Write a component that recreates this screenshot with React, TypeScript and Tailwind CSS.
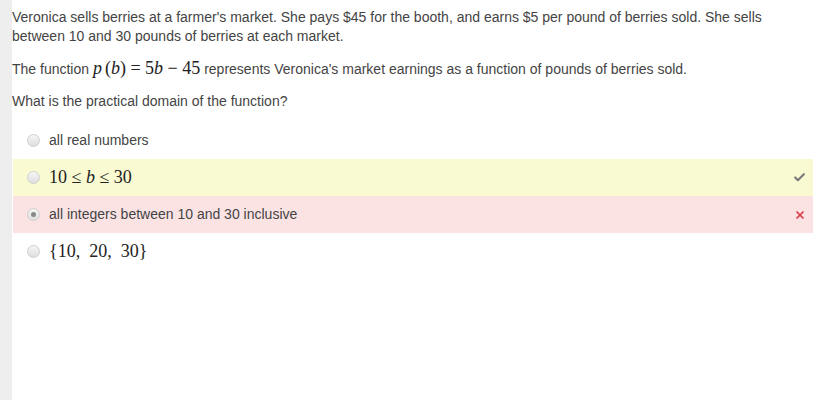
import { Check, X } from 'lucide-react'

const serif = { fontFamily: '"Liberation Serif", "DejaVu Serif", serif' }

function Radio({ checked }: { checked?: boolean }) {
  return (
    <span className="w-[13px] h-[13px] rounded-full border border-[#cfcfcf] bg-gradient-to-b from-[#f6f6f6] to-[#dedede] flex items-center justify-center shrink-0">
      {checked && <span className="w-[5px] h-[5px] rounded-full bg-[#888]" />}
    </span>
  )
}

function Option({
  children,
  bg,
  checked,
  mark
}: {
  children: React.ReactNode
  bg?: string
  checked?: boolean
  mark?: 'ok' | 'bad'
}) {
  return (
    <div className={`h-[37px] flex items-center pl-[14px] pr-[7px] ${bg ?? ''}`}>
      <Radio checked={checked} />
      <div className="ml-[9px] flex-1">{children}</div>
      {mark === 'ok' && <Check size={13} strokeWidth={4} className="text-[#7a7a7a]" />}
      {mark === 'bad' && <X size={12} strokeWidth={3.5} className="text-[#dd3b47]" />}
    </div>
  )
}

export default function App() {
  return (
    <div
      className="flex min-h-[400px] bg-white text-[14px] text-[#444]"
      style={{ fontFamily: '"Liberation Sans", Arial, sans-serif' }}
    >
      <div className="w-[12px] bg-[#eeeeee] shrink-0" />
      <div className="flex-1 pr-[13px]">
        <p className="leading-[19px] pt-[8px] pr-[10px]">
          Veronica sells berries at a farmer's market. She pays $45 for the booth, and earns $5 per pound of berries sold. She sells between 10 and 30 pounds of berries at each market.
        </p>
        <p className="leading-[19px] mt-[13px]">
          The function{' '}
          <span style={serif} className="text-[18px] text-[#222]">
            <i>p</i>&#8198;(<i>b</i>)&#8197;=&#8197;5<i>b</i>&#8197;−&#8197;45
          </span>{' '}
          represents Veronica's market earnings as a function of pounds of berries sold.
        </p>
        <p className="leading-[19px] mt-[13px]">What is the practical domain of the function?</p>
        <div className="mt-[11px] ml-[1px]">
          <Option>all real numbers</Option>
          <Option bg="bg-[#fafad2]" mark="ok">
            <span style={serif} className="text-[18px] text-[#222]">
              10&#8197;≤&#8197;<i>b</i>&#8197;≤&#8197;30
            </span>
          </Option>
          <Option bg="bg-[#fbe3e4]" checked mark="bad">
            all integers between 10 and 30 inclusive
          </Option>
          <Option>
            <span style={serif} className="text-[18px] text-[#222]">
              {'{'}10,&#8194;20,&#8194;30{'}'}
            </span>
          </Option>
        </div>
      </div>
    </div>
  )
}
